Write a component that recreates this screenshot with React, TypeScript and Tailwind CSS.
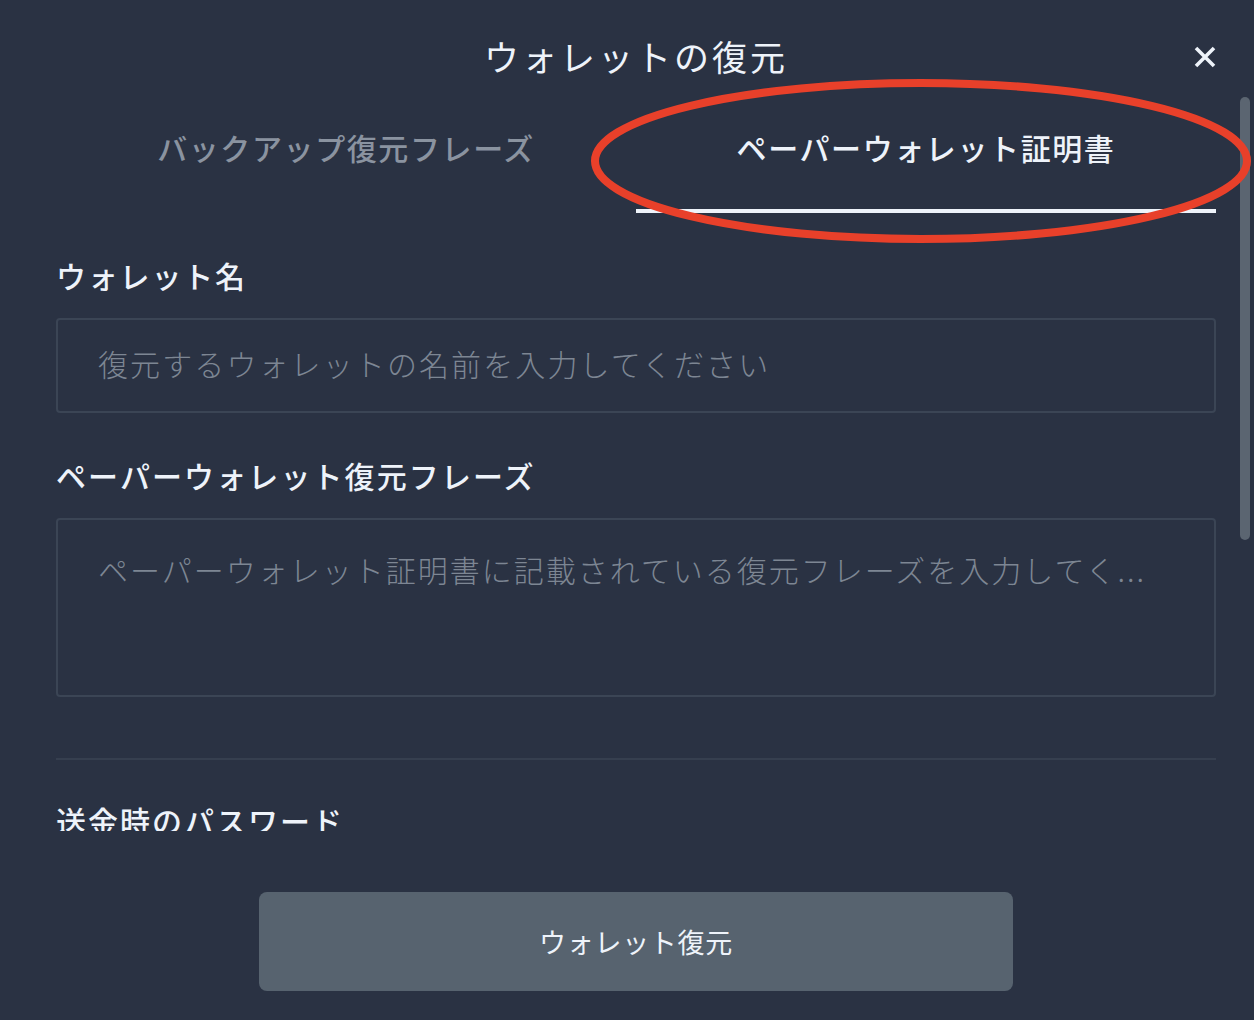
import { useState } from "react";

const font = { fontFamily: '"Noto Sans CJK JP", "Noto Sans", sans-serif' };

export default function App() {
  const [tab, setTab] = useState<"backup" | "paper">("paper");
  const [name, setName] = useState("");
  const [phrase, setPhrase] = useState("");

  return (
    <div
      className="relative flex h-[1020px] w-full flex-col overflow-hidden bg-[#2a3243] text-[#eef3fa]"
      style={font}
    >
      {/* header */}
      <div className="relative h-[96px] shrink-0 pt-[35px] text-center">
        <h1 className="pl-[18px] text-[35px] font-normal leading-[42px] tracking-[3px]">
          ウォレットの復元
        </h1>
        <button className="absolute right-[38px] top-[46px] flex h-[22px] w-[22px] items-center justify-center text-[#eef3fa]">
          <svg width="22" height="22" viewBox="0 0 22 22">
            <path d="M2 2 L20 20 M20 2 L2 20" stroke="currentColor" strokeWidth="3.6" strokeLinecap="butt" />
          </svg>
        </button>
      </div>

      {/* scroll area */}
      <div className="relative h-[735px] shrink-0 overflow-hidden">
        <div className="pl-[56px] pr-[38px]">
          {/* tabs */}
          <div className="grid grid-cols-2">
            <button
              onClick={() => setTab("backup")}
              className={`flex h-[117px] items-start justify-center pt-[31px] text-[30px] font-medium leading-[40px] tracking-[1.6px] ${
                tab === "backup" ? "border-b-4 border-[#eef3fa] text-[#eef3fa]" : "text-[#8a93a0]"
              }`}
            >
              バックアップ復元フレーズ
            </button>
            <button
              onClick={() => setTab("paper")}
              className={`flex h-[117px] items-start justify-center pt-[31px] text-[30px] font-medium leading-[40px] tracking-[1.6px] ${
                tab === "paper" ? "border-b-4 border-[#eef3fa] text-[#eef3fa]" : "text-[#8a93a0]"
              }`}
            >
              ペーパーウォレット証明書
            </button>
          </div>

          {/* wallet name */}
          <label className="mt-[42px] block text-[30px] font-medium leading-[40px] tracking-[1.8px]">
            ウォレット名
          </label>
          <input
            value={name}
            onChange={(e) => setName(e.target.value)}
            placeholder="復元するウォレットの名前を入力してください"
            className="mt-[23px] h-[95px] w-full rounded-[4px] border-2 border-[#3b4555] bg-transparent px-[40px] pb-[6px] text-[30px] font-light tracking-[2.1px] text-[#eef3fa] outline-none placeholder:text-[#7d8693]"
            style={font}
          />

          {/* recovery phrase */}
          <label className="mt-[42px] block text-[30px] font-medium leading-[40px] tracking-[2.1px]">
            ペーパーウォレット復元フレーズ
          </label>
          <textarea
            value={phrase}
            onChange={(e) => setPhrase(e.target.value)}
            wrap="off"
            placeholder="ペーパーウォレット証明書に記載されている復元フレーズを入力してく..."
            className="mt-[23px] block h-[179px] w-full resize-none overflow-hidden rounded-[4px] border-2 border-[#3b4555] bg-transparent px-[40px] pt-[27px] text-[30px] font-light leading-[44px] tracking-[2px] text-[#eef3fa] outline-none placeholder:text-[#7d8693]"
            style={font}
          />

          <div className="mt-[61px] h-[2px] w-full bg-[#363f4f]" />

          <label className="mt-[40px] block text-[30px] font-medium leading-[40px] tracking-[2px]">
            送金時のパスワード
          </label>
          <input
            type="password"
            className="mt-[21px] h-[95px] w-full rounded-[4px] border-2 border-[#3b4555] bg-transparent px-[40px] text-[30px] outline-none"
          />
        </div>

        {/* scrollbar thumb */}
        <div className="absolute right-[4px] top-[1px] h-[443px] w-[10px] rounded-full bg-[#5b6571]" />
      </div>

      {/* footer */}
      <div className="flex flex-1 justify-center pl-[56px] pr-[38px] pt-[61px]">
        <button className="h-[99px] w-[754px] rounded-[8px] bg-[#57636f] text-[27px] leading-[36px] tracking-[0.7px] text-[#eef3fa]">
          ウォレット復元
        </button>
      </div>

      {/* red annotation */}
      <svg
        className="pointer-events-none absolute left-[588px] top-[78px]"
        width="666"
        height="168"
        viewBox="0 0 666 168"
      >
        <ellipse cx="333" cy="83" rx="326" ry="78" fill="none" stroke="#e8402a" strokeWidth="8" />
      </svg>
    </div>
  );
}
